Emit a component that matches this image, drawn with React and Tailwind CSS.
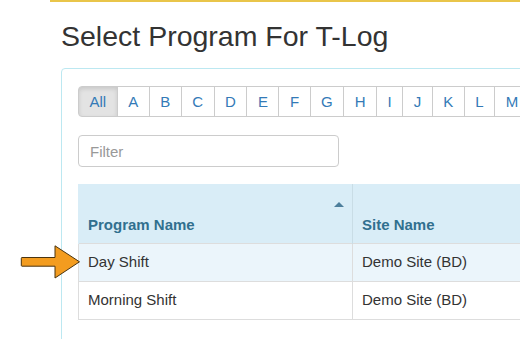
import React from 'react'

const LETTERS = ['All', ...'ABCDEFGHIJKLM'.split('')]

const ROWS = [
  { program: 'Day Shift', site: 'Demo Site (BD)', highlight: true },
  { program: 'Morning Shift', site: 'Demo Site (BD)', highlight: false },
]

function PointerArrow() {
  return (
    <svg
      className="absolute left-[20px] top-[244px]"
      width="62"
      height="36"
      viewBox="0 0 62 36"
    >
      <path
        d="M2 13.5 H35 V1.8 L59.5 17.8 L35 34 V22.2 H2 Q1.3 22.2 1.3 21.4 V14.3 Q1.3 13.5 2 13.5 Z"
        fill="#f39c1f"
        stroke="#4a3410"
        strokeWidth="1"
        strokeLinejoin="miter"
      />
    </svg>
  )
}

export default function App() {
  return (
    <div className="relative h-[339px] w-full overflow-hidden bg-white font-['Liberation_Sans',Arial,sans-serif] text-[#333]">
      <div className="ml-[50px] border-t-2 border-[#e9c54a] pl-[11px]">
        <h2 className="mt-[19px] text-[28.5px] leading-[31px] font-normal text-[#333]">
          Select Program For T-Log
        </h2>

        {/* panel */}
        <div className="mt-[16px] w-[640px] rounded-[4px] border border-[#bce8f1] px-[16px] pt-[17px] pb-[30px]">
          {/* letter filter */}
          <div className="flex flex-nowrap">
            {LETTERS.map((l, i) => (
              <button
                key={l}
                className={`-ml-px first:ml-0 h-[31px] shrink-0 border border-[#ccc] px-[10.5px] text-[15px] leading-[29px] ${
                  i === 0
                    ? 'rounded-l-[4px] bg-[#e3e3e3] text-[#337ab7] shadow-[inset_0_2px_4px_rgba(0,0,0,0.12)]'
                    : 'bg-white text-[#337ab7]'
                }`}
              >
                {l}
              </button>
            ))}
          </div>

          {/* search */}
          <div className="mt-[18px]">
            <input
              type="text"
              placeholder="Filter"
              className="h-[32px] w-[261px] rounded-[4px] border border-[#ccc] px-[11px] text-[15px] text-[#555] placeholder:text-[#999] outline-none"
            />
          </div>

          {/* programs table */}
          <table className="mt-[17px] w-[700px] border-collapse text-[15px] leading-5">
            <thead>
              <tr className="bg-[#d9edf7] text-[#31708f]">
                <th className="relative h-[59px] w-[274px] border-l border-[#d9edf7] px-[9px] pb-2 text-left align-bottom font-bold">
                  <span className="absolute right-[8px] top-[18px] h-0 w-0 border-x-[5px] border-b-[5px] border-x-transparent border-b-[#4d7f9c]" />
                  Program Name
                </th>
                <th className="h-[59px] border-l border-[#c9dde6] px-[9px] pb-2 text-left align-bottom font-bold">
                  Site Name
                </th>
              </tr>
            </thead>
            <tbody>
              {ROWS.map(r => (
                <tr
                  key={r.program}
                  className={`border-t border-[#ddd] ${r.highlight ? 'bg-[#ebf5fb]' : 'bg-white'}`}
                >
                  <td className="h-[38px] border-l border-[#ddd] px-[9px]">{r.program}</td>
                  <td className="h-[38px] border-l border-[#ddd] px-[9px]">{r.site}</td>
                </tr>
              ))}
              <tr className="border-t border-[#ddd]">
                <td colSpan={2} className="h-0 p-0" />
              </tr>
            </tbody>
          </table>
        </div>
      </div>

      <PointerArrow />
    </div>
  )
}
